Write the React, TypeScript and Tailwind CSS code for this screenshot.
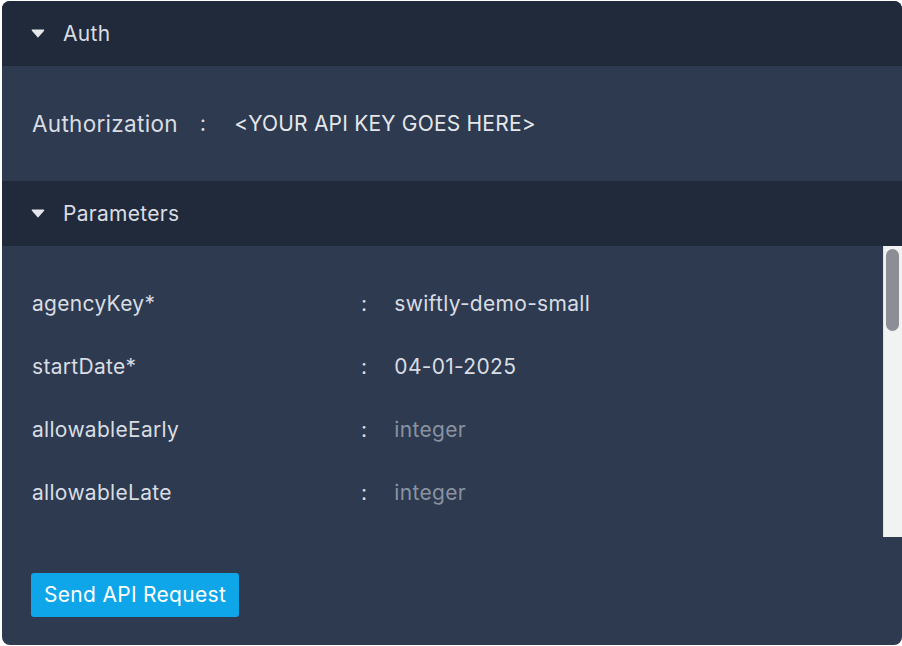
import React from 'react';

const params = [
  { name: 'agencyKey*', value: 'swiftly-demo-small' },
  { name: 'startDate*', value: '04-01-2025' },
  { name: 'allowableEarly', placeholder: 'integer' },
  { name: 'allowableLate', placeholder: 'integer' },
];

const Caret = () => (
  <svg width="14" height="9" viewBox="0 0 14 9" className="shrink-0">
    <path d="M1.5 1.2 H12.5 L7 7.6 Z" fill="#e5e7eb" stroke="#e5e7eb" strokeWidth="1.6" strokeLinejoin="round" />
  </svg>
);

const SectionHeader = ({ title }: { title: string }) => (
  <div className="h-[65px] bg-[#212a3b] flex items-center gap-[18px] pl-[29px]">
    <Caret />
    <span className="text-[21px] tracking-[0.3px] text-[#d9dde3]">{title}</span>
  </div>
);

export default function App() {
  return (
    <div className="w-[902px] h-[646px] bg-white pl-[2px] pt-[1px] font-['Inter','Noto_Sans',sans-serif]">
      <div className="w-[900px] h-[644px] rounded-[8px] overflow-hidden bg-[#2d3a50] flex flex-col">
        <SectionHeader title="Auth" />
        <div className="h-[115px] flex items-center pl-[30px] text-[#d9dde3]">
          <span className="text-[22.5px] tracking-[0.3px]">Authorization</span>
          <span className="ml-[22px] text-[22px]">:</span>
          <span className="ml-[28px] text-[21px] tracking-[0.2px] text-[#e5e7eb]">&lt;YOUR API KEY GOES HERE&gt;</span>
        </div>
        <SectionHeader title="Parameters" />
        <div className="h-[291px] flex">
          <div className="flex-1 pt-[26px]">
            {params.map((p) => (
              <div key={p.name} className="h-[63px] flex items-center pl-[30px] text-[21px] tracking-[0.3px]">
                <span className="w-[329px] text-[#d9dde3]">{p.name}</span>
                <span className="text-[#d9dde3]">:</span>
                <span className={`ml-[27px] ${p.value ? 'text-[#d9dde3]' : 'text-[#8a92a0]'}`}>
                  {p.value ?? p.placeholder}
                </span>
              </div>
            ))}
          </div>
          {/* scrollbar */}
          <div className="w-[19px] bg-[#f1f2f2] border-l border-[#e2e4e4] pt-[3px] pl-[2px] pr-[3px]">
            <div className="h-[82px] rounded-full bg-[#8b8f95]" />
          </div>
        </div>
        <div className="flex-1 flex items-center pl-[29px] pt-[7px]">
          <button className="h-[44px] px-[13px] bg-[#0ea5e9] rounded-[3px] text-white text-[21px] tracking-[0.3px]">
            Send API Request
          </button>
        </div>
      </div>
    </div>
  );
}
